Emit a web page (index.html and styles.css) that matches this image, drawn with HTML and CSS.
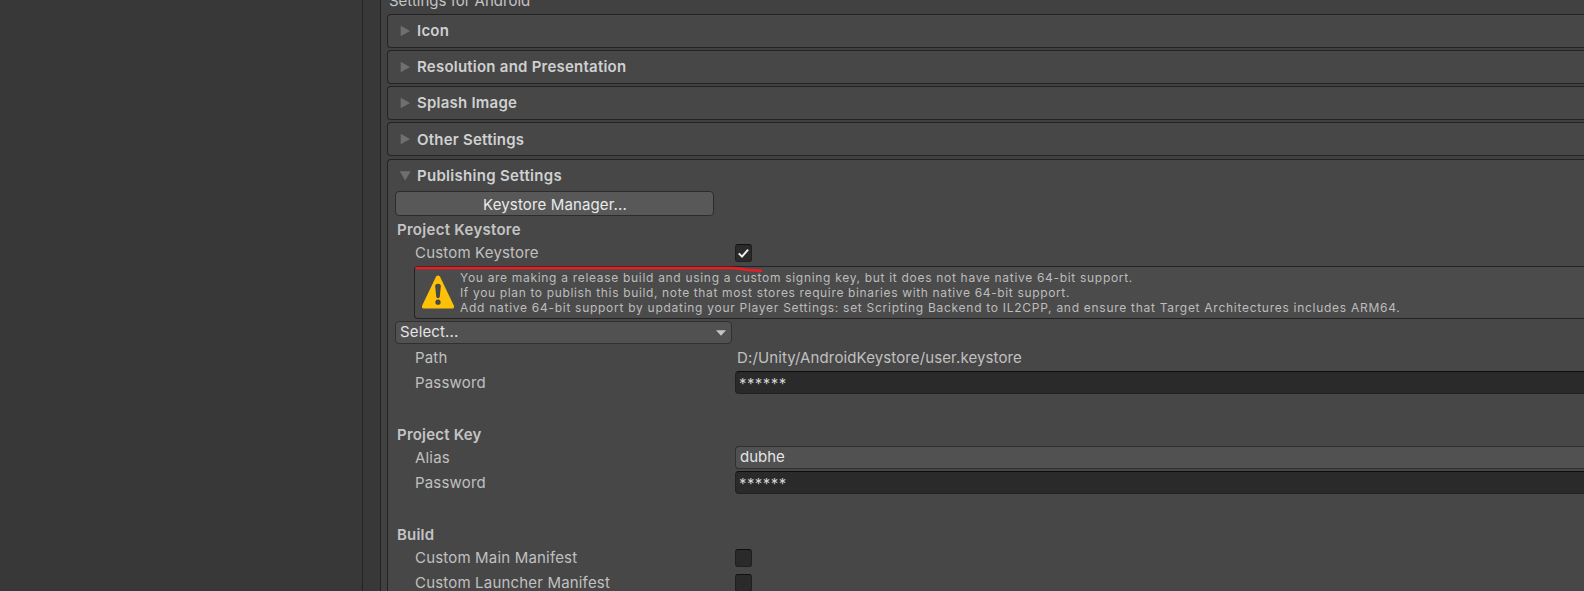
FILE: index.html
```html
<!DOCTYPE html>
<html lang="en">
<head>
<meta charset="utf-8">
<title>Project Settings - Player</title>
<link rel="stylesheet" href="styles.css">
</head>
<body>
<div class="window">
  <aside class="sidebar"></aside>
  <div class="gutter"></div>
  <main class="content">
    <div class="platform">Settings for Android</div>
    <section class="panel"><h2 class="panel-title"><svg class="fold" viewBox="0 0 12 12"><path d="M.7 .7 10 6 .7 11.3z"/></svg><span>Icon</span></h2></section>
    <section class="panel"><h2 class="panel-title"><svg class="fold" viewBox="0 0 12 12"><path d="M.7 .7 10 6 .7 11.3z"/></svg><span>Resolution and Presentation</span></h2></section>
    <section class="panel"><h2 class="panel-title"><svg class="fold" viewBox="0 0 12 12"><path d="M.7 .7 10 6 .7 11.3z"/></svg><span>Splash Image</span></h2></section>
    <section class="panel lower"><h2 class="panel-title"><svg class="fold" viewBox="0 0 12 12"><path d="M.7 .7 10 6 .7 11.3z"/></svg><span>Other Settings</span></h2></section>
    <section class="panel open">
      <h2 class="panel-title"><svg class="fold" viewBox="0 0 12 12"><path d="M-.3 1.3H10.7L5.2 10.6z"/></svg><span>Publishing Settings</span></h2>
      <button class="button">Keystore Manager...</button>
      <h3 class="group">Project Keystore</h3>
      <div class="row short"><span class="label">Custom Keystore</span><span class="check"><svg viewBox="0 0 17 18"><path d="M3.8 9.4 7 12.6 13.1 5.6"/></svg></span></div>
      <div class="help">
        <svg class="warn" viewBox="0 0 34 34"><path class="tri" d="M15.1 1.6Q17 -.6 18.9 1.6L32.8 30.5Q33.8 33.5 31.2 33.5H2.8Q.2 33.5 1.2 30.5z"/><path class="bang" d="M17 8.8Q20 8.8 19.8 11.5L18.8 21.6Q18.5 23.3 17 23.3T15.2 21.6L14.2 11.5Q14 8.8 17 8.8z"/><circle class="bang" cx="17" cy="27.2" r="2.6"/></svg>
        <p class="help-text"><span class="line-1">You are making a release build and using a custom signing key, but it does not have native 64-bit support.</span><span class="line-2">If you plan to publish this build, note that most stores require binaries with native 64-bit support.</span><span>Add native 64-bit support by updating your Player Settings: set Scripting Backend to IL2CPP, and ensure that Target Architectures includes ARM64.</span></p>
        <svg class="underline" viewBox="0 0 350 8"><path d="M1.5 2H316C326 2 328 4.8 346 4.8"/></svg>
      </div>
      <div class="dropdown"><span>Select...</span><svg class="caret" viewBox="0 0 10 6"><path d="M0 .3H10L5 5.8z"/></svg></div>
      <div class="row"><span class="label">Path</span><span class="value">D:/Unity/AndroidKeystore/user.keystore</span></div>
      <div class="row"><span class="label">Password</span><span class="field secret">******</span></div>
      <h3 class="group spaced">Project Key</h3>
      <div class="row"><span class="label">Alias</span><span class="field popup">dubhe</span></div>
      <div class="row"><span class="label">Password</span><span class="field secret">******</span></div>
      <h3 class="group spaced">Build</h3>
      <div class="row"><span class="label">Custom Main Manifest</span><span class="check"></span></div>
      <div class="row"><span class="label">Custom Launcher Manifest</span><span class="check"></span></div>
    </section>
  </main>
</div>
</body>
</html>
```
FILE: styles.css
```css
* { box-sizing: border-box; }
body {
  margin: 0;
  background: #383838;
  color: #c0c0c0;
  font: 15px/20px Inter, "Liberation Sans", sans-serif;
  letter-spacing: 0.14px;
}
h2, h3, p { margin: 0; }
svg { display: block; flex: none; }
.window { display: flex; height: 591px; overflow: hidden; white-space: nowrap; }
.sidebar { flex: none; width: 363px; border-right: 1px solid #232323; }
.gutter { flex: none; width: 18px; border-right: 1px solid #232323; }
.content { flex: 1; min-width: 0; padding-left: 6px; background: #414141; }
.platform { height: 14px; padding-left: 2px; line-height: 20px; margin-top: -9px; margin-bottom: 9px; color: #c4c4c4; letter-spacing: 0; }
.panel {
  height: 34px;
  margin-bottom: 2px;
  border: 1px solid #232323;
  border-right: 0;
  border-radius: 4px 0 0 4px;
  background: #474747;
}
.panel.open { height: 460px; margin-top: 3px; padding-left: 7px; }
.panel-title {
  display: flex;
  align-items: center;
  gap: 5px;
  height: 32px;
  padding-left: 12px;
  color: #d0d0d0;
  font-size: 15px;
  font-weight: 600;
  letter-spacing: 0.23px;
}
.lower .panel-title span { padding-top: 2px; }
.open .panel-title { height: 31px; padding-left: 5px; letter-spacing: 0.3px; }
.fold { width: 12px; height: 12px; fill: #6f6f6f; overflow: visible; }
.button {
  display: block;
  width: 319px;
  height: 25px;
  padding: 2px 0 0 1px;
  border: 1px solid #2c2c2c;
  border-radius: 4px;
  background: #585858;
  color: #eaeaea;
  font: inherit;
  letter-spacing: inherit;
  line-height: 20px;
}
.group { height: 26px; padding: 4px 0 0 2px; font-size: 15px; font-weight: 600; color: #c4c4c4; letter-spacing: 0.28px; }
.group.spaced { height: 50px; padding-top: 30px; letter-spacing: 0.2px; }
.row { display: grid; grid-template-columns: 320px 1fr; align-items: center; height: 25px; padding-left: 20px; }
.row.short { height: 24px; padding-bottom: 3px; }
.label { letter-spacing: 0.18px; }
.value { padding-left: 2px; letter-spacing: 0.12px; }
.check {
  width: 17px;
  height: 18px;
  border: 1px solid #1f1f1f;
  border-top-color: #101010;
  border-radius: 3px;
  background: #2a2a2a;
}
.check svg { width: 17px; height: 18px; margin: -1px; fill: none; stroke: #f0f0f0; stroke-width: 2; }
.field {
  height: 23px;
  padding-left: 4px;
  border: 1px solid #212121;
  border-top-color: #0d0d0d;
  border-right: 0;
  border-radius: 4px 0 0 4px;
  background: #2a2a2a;
  color: #d2d2d2;
  line-height: 21px;
}
.field.secret { padding-left: 3px; line-height: 23px; letter-spacing: 0.42px; }
.field.popup { border-color: #303030; background: #515151; color: #e4e4e4; line-height: 20px; letter-spacing: 0; }
.help {
  position: relative;
  display: flex;
  height: 53px;
  margin-left: 19px;
  padding: 3px 0 0 6px;
  border: 1px solid #232323;
  border-right: 0;
  border-radius: 4px 0 0 4px;
  background: #4b4b4b;
}
.warn { width: 34px; height: 34px; margin-top: 5px; }
.tri { fill: #ffc107; }
.bang { fill: #474747; }
.help-text { padding-left: 5px; color: #bdbdbd; font-size: 12px; line-height: 15px; letter-spacing: 0.72px; }
.help-text span { display: block; }
.help-text .line-1 { letter-spacing: 0.69px; }
.help-text .line-2 { letter-spacing: 0.645px; }
.underline { position: absolute; left: 0; top: -1px; width: 350px; height: 8px; fill: none; stroke: #ed1c24; stroke-width: 2.5; stroke-linecap: round; }
.dropdown {
  display: flex;
  align-items: center;
  justify-content: space-between;
  width: 337px;
  height: 23px;
  margin: 2px 0 1px;
  padding: 0 5px 0 4px;
  border: 1px solid #303030;
  border-radius: 4px;
  background: #515151;
  color: #e4e4e4;
}
.dropdown span { padding-bottom: 2px; }
.caret { width: 10px; height: 6px; fill: #c4c4c4; }
```
